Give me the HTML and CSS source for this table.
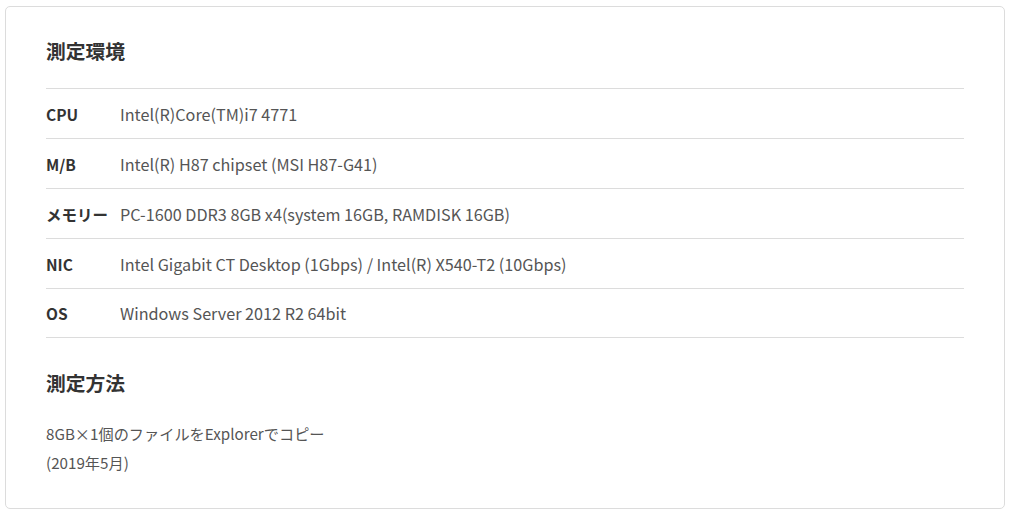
FILE: index.html
```html
<!DOCTYPE html>
<html lang="ja">
<head>
<meta charset="utf-8">
<link rel="stylesheet" href="styles.css">
</head>
<body>
<div class="card">
  <h2 class="title">測定環境</h2>
  <div class="spec">
    <div class="row"><div class="label">CPU</div><div class="value">Intel(R)Core(TM)i7 4771</div></div>
    <div class="row"><div class="label">M/B</div><div class="value">Intel(R) H87 chipset (MSI H87-G41)</div></div>
    <div class="row"><div class="label">メモリー</div><div class="value">PC-1600 DDR3 8GB x4(system 16GB, RAMDISK 16GB)</div></div>
    <div class="row"><div class="label">NIC</div><div class="value">Intel Gigabit CT Desktop (1Gbps) / Intel(R) X540-T2 (10Gbps)</div></div>
    <div class="row row-last"><div class="label">OS</div><div class="value">Windows Server 2012 R2 64bit</div></div>
  </div>
  <h2 class="title title2">測定方法</h2>
  <p class="desc">8GB×1個のファイルをExplorerでコピー<br>(2019年5月)</p>
</div>
</body>
</html>
```
FILE: styles.css
```css
html, body { margin: 0; padding: 0; background: #fff; }
body {
  padding: 6px 6px 4px 5px;
  font-family: "Noto Sans CJK JP", "Noto Sans", sans-serif;
  color: #444;
}
.card {
  box-sizing: border-box;
  width: 1000px;
  height: 503px;
  border: 1px solid #dcdcdc;
  border-radius: 5px;
  padding: 30px 40px 0 40px;
}
.title {
  margin: 0;
  font-size: 19.8px;
  font-weight: 700;
  line-height: 28px;
  color: #333;
}
.spec {
  margin-top: 23px;
  border-bottom: 1px solid #dcdcdc;
}
.row {
  display: flex;
  align-items: center;
  height: 49px;
  border-top: 1px solid #dcdcdc;
}
.row-last { height: 48px; }
.label {
  width: 74px;
  font-size: 15.5px;
  font-weight: 700;
  color: #333;
}
.value { font-size: 16.2px; color: #555; }
.title2 { margin-top: 31px; }
.desc {
  margin: 22px 0 0;
  font-size: 15.2px;
  line-height: 29px;
  color: #555;
}
```
